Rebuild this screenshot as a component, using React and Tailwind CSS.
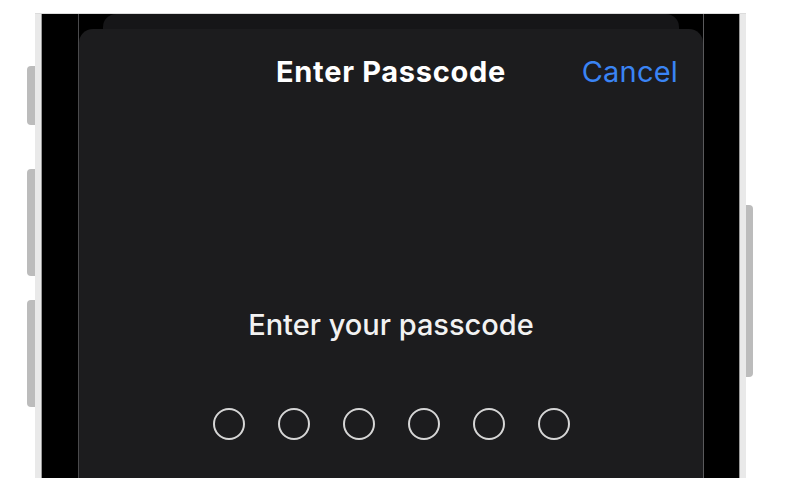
export default function App() {
    return (
        <div
            className="w-[798px] h-[504px] bg-white flex items-start pt-[13px] pl-[27px] overflow-hidden"
            style={{ fontFamily: "Inter, 'Noto Sans', sans-serif" }}
        >
            {/* Left side buttons */}
            <div className="w-[8px] flex flex-col">
                <div className="mt-[53px] h-[59px] rounded-l-[4px] bg-[#bcbcbc]" />
                <div className="mt-[44px] h-[107px] rounded-l-[4px] bg-[#bcbcbc]" />
                <div className="mt-[24px] h-[107px] rounded-l-[4px] bg-[#bcbcbc]" />
            </div>

            {/* Phone frame */}
            <div className="h-[465px] flex border-t border-[#dcdcdc]">
                <div className="w-[6px] bg-[#e9e9e9]" />
                <div className="w-[1px] bg-[#9a9a9a]" />
                <div className="w-[36px] bg-black" />
                <div className="w-[1px] bg-[#4a4a4c]" />

                {/* Screen */}
                <div className="w-[624px] bg-black flex flex-col">
                    <div className="mx-[24px] h-[15px] rounded-t-[13px] bg-[#161618]" />
                    <div className="flex-1 rounded-t-[14px] bg-[#1c1c1e] flex flex-col items-center">
                        <div className="w-full grid grid-cols-[1fr_auto_1fr] items-center pt-[26px] px-[25px]">
                            <div />
                            <div className="text-[29px] leading-[34px] font-bold tracking-[0.7px] text-white">
                                Enter Passcode
                            </div>
                            <div className="justify-self-end text-[29px] leading-[34px] tracking-[0.2px] text-[#3a84f4]">
                                Cancel
                            </div>
                        </div>

                        <div className="mt-[218px] text-[29px] leading-[36px] font-medium text-[#f2f2f2]">
                            Enter your passcode
                        </div>

                        <div className="mt-[65px] flex gap-[33px]">
                            {[0, 1, 2, 3, 4, 5].map((i) => (
                                <div
                                    key={i}
                                    className="w-[32px] h-[32px] rounded-full border-2 border-[#d6d6d6]"
                                />
                            ))}
                        </div>
                    </div>
                </div>

                <div className="w-[1px] bg-[#5a5a5c]" />
                <div className="w-[35px] bg-black" />
                <div className="w-[1px] bg-[#9a9a9a]" />
                <div className="w-[6px] bg-[#e9e9e9]" />
            </div>

            {/* Right side button */}
            <div className="w-[7px] mt-[192px] h-[172px] rounded-r-[4px] bg-[#bcbcbc]" />
        </div>
    );
}
